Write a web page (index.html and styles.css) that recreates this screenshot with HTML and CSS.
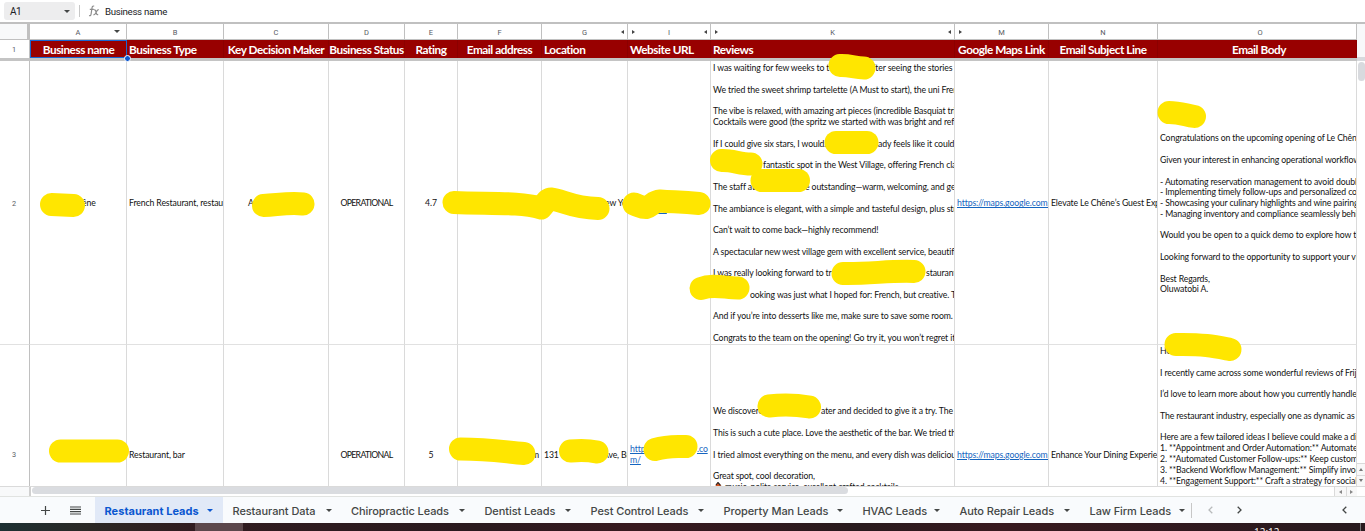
FILE: index.html
```html
<!DOCTYPE html>
<html lang="en">
<head>
<meta charset="utf-8">
<title>Restaurant Leads</title>
<link rel="stylesheet" href="styles.css">
</head>
<body>
<div class="app">
  <div class="formula">
    <div class="namebox"><span>A1</span><i class="caret"></i></div>
    <i class="fsep"></i>
    <svg class="fx" width="12" height="12" viewBox="0 0 12 12"><path d="M6.2 1.2C4.6.6 4.2 1.6 4 3L3.100 9c-.2 1.500-.9 2-2 1.500M1.800 4.300h4M6 5c1.200-.6 1.600.3 2 2s.8 3.200 2.200 2.500M10.700 4.700C9 4.300 8 8 7 9.200c-.5.6-1 .7-1.600.4"/></svg>
    <span class="ftext">Business name</span>
  </div>

  <div class="sheet">
    <div class="grid">
      <div class="row letters">
        <div class="corner"></div>
        <div class="col">A<i class="caret menu"></i></div><div class="col">B</div><div class="col">C</div><div class="col">D</div><div class="col">E</div><div class="col">F</div>
        <div class="col">G<i class="tri l end"></i></div>
        <div class="col"><i class="tri r start"></i>I<i class="tri l end"></i></div>
        <div class="col"><i class="tri r start"></i>K<i class="tri l end"></i></div>
        <div class="col"><i class="tri r start"></i>M</div><div class="col">N</div><div class="col wide">O</div>
      </div>
      <div class="row titles">
        <div class="num">1</div>
        <div class="th mid sel">Business name<i class="handle"></i></div><div class="th">Business Type</div><div class="th mid">Key Decision Maker</div><div class="th mid">Business Status</div><div class="th mid">Rating</div><div class="th mid">Email address</div><div class="th">Location</div><div class="th">Website URL</div><div class="th">Reviews</div><div class="th mid">Google Maps Link</div><div class="th mid">Email Subject Line</div><div class="th mid wide">Email Body</div>
      </div>
      <div class="freeze"></div>
      <div class="row r2">
        <div class="num">2</div>
        <div class="td"><p><span class="seg chene"></span>êne</p></div>
        <div class="td"><p>French Restaurant, restaurant</p></div>
        <div class="td"><p><span class="seg owner"></span>A</p></div>
        <div class="td mid"><p class="caps">OPERATIONAL</p></div>
        <div class="td mid"><p>4.7</p></div>
        <div class="td"></div>
        <div class="td"><p><span class="seg city"></span>ew York</p></div>
        <div class="td"><p>
<a><span class="seg w26"></span>m/</a></p></div>
        <div class="td"><p>I was waiting for few weeks to t<span class="seg gap"></span>fter seeing the stories

We tried the sweet shrimp tartelette (A Must to start), the uni French

The vibe is relaxed, with amazing art pieces (incredible Basquiat triptych
Cocktails were good (the spritz we started with was bright and refreshing

<span class="seg w165">If I could give six stars, I would.</span>ady feels like it could

<span class="seg w50"></span>fantastic spot in the West Village, offering French classics

<span class="seg w92">The staff at</span>e outstanding—warm, welcoming, and genuine

The ambiance is elegant, with a simple and tasteful design, plus stunning

Can’t wait to come back—highly recommend!

A spectacular new west village gem with excellent service, beautiful

<span class="seg w213">I was really looking forward to tr</span>staurant

<span class="seg w37">Their c</span>ooking was just what I hoped for: French, but creative. The

And if you’re into desserts like me, make sure to save some room.

Congrats to the team on the opening! Go try it, you won’t regret it</p></div>
        <div class="td"><p><a>https://maps.google.com/maps</a></p></div>
        <div class="td"><p>Elevate Le Chêne’s Guest Experience</p></div>
        <div class="td"><p>

Congratulations on the upcoming opening of Le Chêne

Given your interest in enhancing operational workflows

- Automating reservation management to avoid double
- Implementing timely follow-ups and personalized comm
- Showcasing your culinary highlights and wine pairings
- Managing inventory and compliance seamlessly behind

Would you be open to a quick demo to explore how this

Looking forward to the opportunity to support your vision

Best Regards,
Oluwatobi A.</p></div>
      </div>
      <div class="row r3">
        <div class="num">3</div>
        <div class="td"></div>
        <div class="td"><p>Restaurant, bar</p></div>
        <div class="td"></div>
        <div class="td mid"><p class="caps">OPERATIONAL</p></div>
        <div class="td mid"><p>5</p></div>
        <div class="td"><p><span class="seg mail"></span>m</p></div>
        <div class="td"><p><span class="seg w59">131</span>Ave, Brooklyn</p></div>
        <div class="td"><p><a><span class="seg w67">http</span>.co</a>
<a>m/</a></p></div>
        <div class="td"><p><span class="seg w108">We discovere</span>ater and decided to give it a try. The

This is such a cute place. Love the aesthetic of the bar. We tried the

I tried almost everything on the menu, and every dish was delicious

Great spot, cool decoration,
<svg class="emoji" width="10" height="9" viewBox="0 0 10 9"><path d="M1 8L3 2.500 5 .5l3 3L9.500 9H1z" fill="#d9541e"/><path d="M3 3L5 .5l2.500 2.800M8 4l1.500 5" fill="none" stroke="#2b2320" stroke-width="1.200"/></svg> music, polite service, excellent crafted cocktails
<br></p></div>
        <div class="td"><p><a>https://maps.google.com/maps</a></p></div>
        <div class="td"><p>Enhance Your Dining Experience</p></div>
        <div class="td top"><p>Hello

I recently came across some wonderful reviews of Frijoles

I’d love to learn more about how you currently handle

The restaurant industry, especially one as dynamic as yours

Here are a few tailored ideas I believe could make a difference
1. **Appointment and Order Automation:** Automate
2. **Automated Customer Follow-ups:** Keep customers
3. **Backend Workflow Management:** Simplify invoices
4. **Engagement Support:** Craft a strategy for social</p></div>
      </div>
    </div>
    <div class="vscroll"><div class="vhead"></div><div class="vthumb"></div><div class="vbtn"><i class="tri u"></i></div><div class="vbtn"><i class="tri d"></i></div></div>
  </div>

  <div class="hscroll"><div class="hcorner"></div><div class="hthumb"></div><div class="hbtns"><span><i class="tri l"></i></span><span><i class="tri r"></i></span></div></div>

  <div class="tabbar">
    <svg class="plus" width="9" height="9" viewBox="0 0 9 9"><path d="M4.500 0v9M0 4.500h9"/></svg>
    <svg class="burger" width="11" height="9" viewBox="0 0 11 9"><path d="M0 1h11M0 3.300h11M0 5.700h11M0 8h11"/></svg>
    <div class="tabs">
      <div class="tab on"><span>Restaurant Leads</span><i class="caret"></i></div>
      <div class="tab"><span>Restaurant Data</span><i class="caret"></i></div>
      <div class="tab"><span>Chiropractic Leads</span><i class="caret"></i></div>
      <div class="tab"><span>Dentist Leads</span><i class="caret"></i></div>
      <div class="tab"><span>Pest Control Leads</span><i class="caret"></i></div>
      <div class="tab"><span>Property Man Leads</span><i class="caret"></i></div>
      <div class="tab"><span>HVAC Leads</span><i class="caret"></i></div>
      <div class="tab"><span>Auto Repair Leads</span><i class="caret"></i></div>
      <div class="tab last"><span>Law Firm Leads</span><i class="caret"></i></div>
    </div>
    <i class="tsep"></i>
    <svg class="chev prev" width="5" height="8" viewBox="0 0 5 8"><path d="M4.300.7L1 4l3.300 3.300"/></svg>
    <svg class="chev next" width="5" height="8" viewBox="0 0 5 8"><path d="M.7.7L4 4 .7 7.300"/></svg>
    <svg class="chev side" width="5" height="8" viewBox="0 0 5 8"><path d="M4.300.7L1 4l3.300 3.300"/></svg>
  </div>
  <div class="taskbar"><div class="running"></div><span class="clock">12:12</span><i class="peek"></i></div>

  <svg class="marks" width="1365" height="531" viewBox="0 0 1365 531">
    <path d="M51.500 204.500L73.500 205.500"/>
    <path d="M263.500 205.500C280 204.500 290 202.500 303 204"/>
    <path d="M454 202.500C490 204 520 202 541 208C546 203 547 199 551 199C562 200 572 208 598 208.500"/>
    <path d="M634 204C640 206 641 207.500 646 207.500C652 206 653 201.500 660 201C675 202 682 202 699 203.500"/>
    <path d="M840 65.500C850 65 855 68 864 68"/>
    <path d="M836 142.500L867 142.500"/>
    <path d="M721.500 160.500C732 160 740 164 751 164"/>
    <path d="M762 180.500L798.500 180.500"/>
    <path d="M843 273.500C870 274 890 270.500 914 271.500"/>
    <path d="M701 288.500C713 284 725 288 738 288"/>
    <path d="M1169 112.500C1180 112.500 1185 115 1194.500 116.500"/>
    <path d="M1176 344.500C1205 344 1215 346.500 1230 349.500"/>
    <path d="M60.500 451L117.500 451"/>
    <path d="M460.500 449C490 449 505 452 524 453.500"/>
    <path d="M570.500 451C580 450 588 450 597 452"/>
    <path d="M655 449.500C668 445.500 674 446.500 686 446.500"/>
    <path d="M769 406C785 404 798 405 809.500 407"/>
  </svg>
</div>
</body>
</html>
```
FILE: styles.css
```css
* { box-sizing: border-box; }
body { margin: 0; background: #fff; }
.app { position: relative; width: 1365px; height: 531px; overflow: hidden; display: flex; flex-direction: column; font-family: Roboto, sans-serif; color: #202124; }
i { display: block; flex: none; }
svg { flex: none; }
.caret { width: 0; height: 0; border: 3px solid transparent; border-top-color: #444746; border-bottom: 0; }

.formula { height: 24px; flex: none; border-bottom: 2px solid #c0c0c0; display: flex; align-items: center; font-size: 10px; }
.namebox { width: 71px; height: 18px; margin-left: 4px; padding: 0 5px 0 6px; background: #ededee; border-radius: 3px; display: flex; align-items: center; justify-content: space-between; }
.namebox span { letter-spacing: -.6px; }
.fsep { width: 1px; height: 12px; margin-left: 4px; background: #c7c7c7; }
.fx { margin-left: 8px; fill: none; stroke: #8c8c8c; stroke-width: 1.2; }
.ftext { margin-left: 5px; font-size: 9.700px; letter-spacing: -.3px; }

.sheet { height: 462px; flex: none; display: flex; overflow: hidden; }
.grid { width: 1357px; flex: none; }
.row { display: grid; grid-template-columns: 30px 97px 97px 105px 76px 53px 84px 86px 83px 244px 94px 109px 199px; }
.letters { height: 16px; border-bottom: 1px solid #c0c0c0; }
.corner { background: #f8f9fa; border-right: 3px solid #c0c0c0; }
.col { position: relative; border-right: 1px solid #c0c0c0; display: flex; align-items: center; justify-content: center; font-size: 7.500px; color: #575b5f; padding-top: 1px; }
.menu { position: absolute; right: 6px; top: 6px; }
.tri { width: 0; height: 0; border: 2.5px solid transparent; }
.tri.l { border-right: 3px solid #444; border-left: 0; }
.tri.r { border-left: 3px solid #444; border-right: 0; }
.tri.u { border-bottom: 3px solid #777; border-top: 0; }
.tri.d { border-top: 3px solid #777; border-bottom: 0; }
.start, .end { position: absolute; top: 5.5px; }
.start { left: 4px; }
.end { right: 3px; }
.titles { height: 18px; }
.num { border-right: 1px solid #c0c0c0; display: flex; align-items: center; justify-content: center; font-size: 7.300px; color: #575b5f; padding: 1px 1px 0 0; }
.th { background: #980000; color: #fff; font: 700 11.800px/19px Lato, sans-serif; height: 18px; white-space: nowrap; padding: 0 2px; border-right: 1px solid #8b0000; letter-spacing: -.46px; }
.mid { text-align: center; }
.th.mid { display: flex; justify-content: center; }
.wide.wide { padding-left: 6px; }
.sel { position: relative; box-shadow: inset 0 0 0 1px #1a67d2; border: 0; }
.handle { position: absolute; right: -4px; bottom: -4px; width: 7px; height: 7px; border-radius: 50%; background: #0b57d0; border: 1px solid #fff; z-index: 2; }
.freeze { height: 3px; background: #c4c4c4; }
.r2 { height: 284px; }
.r3 { height: 219px; }
.r2 > *, .r3 > * { border-bottom: 1px solid #e1e1e1; }
.td { border-right: 1px solid #dadada; padding: 2px 2px 0; display: flex; align-items: center; overflow: hidden; }
.td.mid { justify-content: center; }
.td.top { align-items: flex-start; padding-top: 1px; }
.td p { margin: 0; white-space: pre; font: 8.700px/10.800px Lato, sans-serif; color: #111; letter-spacing: -.12px; }
.td .caps { letter-spacing: -.65px; }
.td a { color: #1565c0; text-decoration: underline; }
.seg { display: inline-block; vertical-align: baseline; }
.gap { width: 43px; }
.w165 { width: 165px; } .w50 { width: 50px; } .w92 { width: 92px; } .w213 { width: 213px; }
.w37 { width: 37px; } .w59 { width: 59px; } .w67 { width: 67px; text-decoration: underline; } .w108 { width: 108px; }
.w26 { width: 26px; }
.chene { width: 50px; } .owner { width: 22px; } .city { width: 61px; } .mail { width: 72px; }
.emoji { vertical-align: -1px; margin-top: -3px; }

.vscroll { width: 8px; display: flex; flex-direction: column; align-items: center; background: #fff; }
.vhead { width: 8px; height: 37px; background: #f8f9fa; border-bottom: 4px solid #d8dade; }
.vthumb { width: 7px; height: 19px; margin: 1px 0 auto; border-radius: 4px; background: #d8dade; }
.vbtn { width: 8px; height: 11.500px; background: #f8f8f8; border-top: 1px solid #dadada; display: flex; align-items: center; justify-content: center; }

.hscroll { height: 10px; flex: none; display: flex; align-items: flex-start; border-top: 1px solid #dadada; }
.hcorner { width: 31px; height: 9px; background: #f8f9fa; border-right: 2px solid #d0d0d0; }
.hthumb { width: 816px; height: 7px; margin-left: 1px; background: #dadce0; border-radius: 4px; }
.hbtns { display: flex; margin-left: auto; margin-right: 8px; height: 9px; }
.hbtns span { width: 11.500px; background: #f8f8f8; border-left: 1px solid #dadada; display: flex; align-items: center; justify-content: center; }
.hbtns .tri.l { border-right-color: #888; }
.hbtns .tri.r { border-left-color: #888; }

.tabbar { height: 27px; flex: none; background: #f9fbfd; border-top: 1px solid #e1e3e1; display: flex; align-items: center; }
.plus { margin-left: 41px; } .burger { margin-left: 20px; }
.plus, .burger { fill: none; stroke: #444746; stroke-width: 1.200; }
.tabs { margin-left: 14px; height: 26px; display: grid; grid-template-columns: 128px 118.500px 133.500px 106px 133px 139px 97px 130px 110.500px; }
.tab { display: flex; align-items: center; justify-content: space-between; padding: 2px 10px 0 9.500px; font: 500 11px/14px Inter, sans-serif; white-space: nowrap; color: #444746; letter-spacing: -.08px; }
.tab .caret { margin-top: -1px; }
.tab.last { padding-right: 6px; }
.on { background: #e1e9f7; color: #0b57d0; font-weight: 700; letter-spacing: .03px; }
.on .caret { border-top-color: #0b57d0; }
.tsep { width: 1px; height: 15px; background: #c7c7c7; }
.chev { fill: none; stroke: #444746; stroke-width: 1.300; }
.prev { margin-left: 16px; stroke: #b8babb; } .next { margin-left: 24px; } .side { margin-left: auto; margin-right: 18px; }

.taskbar { height: 8px; flex: none; position: relative; overflow: hidden; display: flex; background: linear-gradient(90deg, #1d3033 0, #2b2825 90px, #301c20 190px, #2a1a1e 480px, #38191f 640px, #281a1d 860px, #38191f 1000px, #281a1e 1365px); }
.running { width: 48px; margin-left: 195px; background: #5b474b; }
.clock { margin-left: 1011px; padding-top: 4px; color: #fff; font: 10px/10px "Open Sans", sans-serif; }
.peek { width: 1px; margin-left: auto; margin-right: 4px; background: #777; }

.marks { position: absolute; left: 0; top: 0; fill: none; stroke: #ffe600; stroke-width: 23; stroke-linecap: round; stroke-linejoin: round; }
```
